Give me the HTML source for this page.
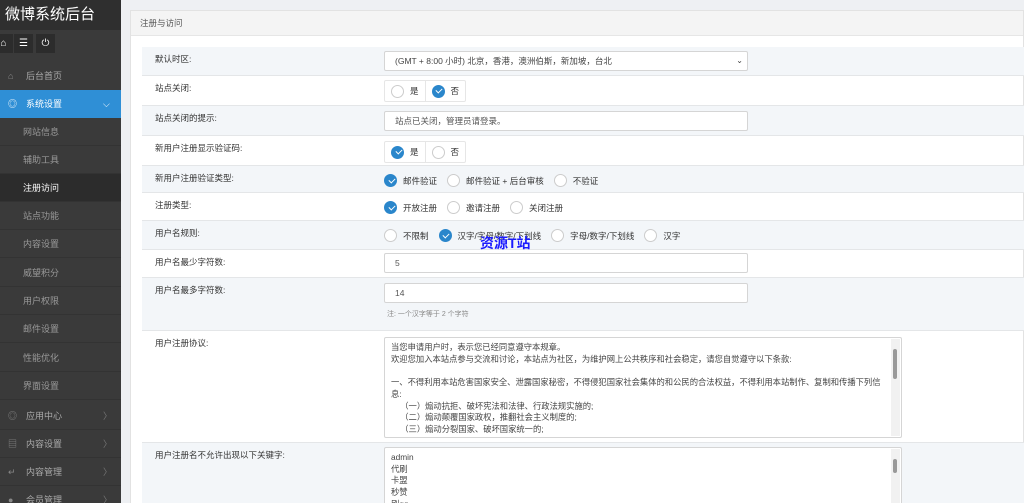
<!DOCTYPE html>
<html style="width:1024px;height:503px;overflow:hidden"><head><meta charset="utf-8"><style>
*{box-sizing:border-box;margin:0;padding:0}
body{width:1024px;height:503px;overflow:hidden;background:#eef0f3;font-family:"Liberation Sans","Noto Sans CJK SC",sans-serif;font-size:9px;color:#333;position:relative}
.sb{position:absolute;left:0;top:0;width:121px;height:503px;background:#3a3a3a}
.logo{height:30px;background:#2f2f2f;color:#fff;font-size:15px;line-height:30px;padding-left:5px}
.btns{height:30px;position:relative}
.btns div{position:absolute;top:4px;width:19px;height:19px;background:#2c2c2c;color:#fff;font-size:10px;text-align:center;line-height:19px}
.mi{position:absolute;left:0;width:121px;height:28px;line-height:28px;color:#aaa;font-size:9px}
.mi .ic{position:absolute;left:8px;color:#888}
.mi .t{position:absolute;left:26px}
.mi .ar{position:absolute;left:103px;color:#777}
.sub{position:absolute;left:0;width:121px;height:28px;line-height:28px;color:#999;padding-left:23px;border-bottom:1px solid #333}
.main{position:absolute;left:130px;top:10px;right:0;bottom:0;background:#fff;border:1px solid #e2e2e2;border-bottom:none}
.ph{height:25px;background:#f4f4f4;border-bottom:1px solid #e6e6e6;line-height:24px;padding-left:9px;font-size:8.5px;color:#555}
.row{position:absolute;left:142px;right:0;border-bottom:1px solid #e4e6e8}
.row.a{background:#f3f6f9}
.lb{position:absolute;left:13px;top:6px;font-size:8.5px;color:#333}
.inp{position:absolute;left:242px;width:364px;height:20px;border:1px solid #d5d5d5;border-radius:2px;background:#fff;padding-left:10px;line-height:18px;font-size:8.5px;color:#555}
.rg{position:absolute;left:242px;height:22px;border:1px solid #e6e6e6;border-radius:2px;background:#fff;display:flex}
.rg span{display:flex;align-items:center;padding:0 6px;border-right:1px solid #e6e6e6;font-size:8.5px}
.rg span:last-child{border:none}
.c{display:inline-block;width:13px;height:13px;border-radius:50%;border:1px solid #ccc;background:#fff;margin-right:6px;position:relative}
.c.on{background:#2a86cb;border-color:#2a86cb}
.c.on:after{content:"";position:absolute;left:3.5px;top:2.5px;width:5px;height:3px;border-left:1.5px solid #fff;border-bottom:1.5px solid #fff;transform:rotate(-45deg)}
.ro{position:absolute;left:242px;display:flex;align-items:center;font-size:8.5px}
.ro .s{margin-right:10px}
.ta{position:absolute;left:242px;width:518px;border:1px solid #d5d5d5;border-radius:2px;background:#fff;padding:4px 6px;font-size:8.3px;line-height:11.7px;color:#444;overflow:hidden}
.scr{position:absolute;right:1px;top:1px;width:9px;bottom:1px;background:#f1f1f1}
.scr i{position:absolute;left:2px;width:4px;height:30px;top:10px;background:#999;border-radius:2px}
</style></head><body>
<div class="sb">
<div class="logo">微博系统后台</div>
<div class="btns"><div style="left:-6px">⌂</div><div style="left:14px">☰</div><div style="left:36px">⏻</div></div>
<div class="mi" style="top:62px"><span class="ic">⌂</span><span class="t">后台首页</span></div>
<div class="mi" style="top:90px;background:#2f8fd6;color:#fff"><span class="ic" style="color:#fff">◎</span><span class="t">系统设置</span><span class="ar" style="color:#fff">⌵</span></div>
<div class="sub" style="top:118px">网站信息</div>
<div class="sub" style="top:146px">辅助工具</div>
<div class="sub" style="top:174px;background:#2c2c2c;color:#fff">注册访问</div>
<div class="sub" style="top:202px">站点功能</div>
<div class="sub" style="top:230px">内容设置</div>
<div class="sub" style="top:259px">威望积分</div>
<div class="sub" style="top:287px">用户权限</div>
<div class="sub" style="top:315px">邮件设置</div>
<div class="sub" style="top:344px">性能优化</div>
<div class="sub" style="top:372px">界面设置</div>
<div class="mi" style="top:402px;border-bottom:1px solid #333"><span class="ic">◎</span><span class="t">应用中心</span><span class="ar">〉</span></div>
<div class="mi" style="top:430px;border-bottom:1px solid #333"><span class="ic">▤</span><span class="t">内容设置</span><span class="ar">〉</span></div>
<div class="mi" style="top:458px;border-bottom:1px solid #333"><span class="ic">↵</span><span class="t">内容管理</span><span class="ar">〉</span></div>
<div class="mi" style="top:486px"><span class="ic">●</span><span class="t">会员管理</span><span class="ar">〉</span></div>
</div>
<div class="main"><div class="ph">注册与访问</div></div>

<div class="row a" style="top:47px;height:29px"><div class="lb">默认时区:</div><div class="inp" style="top:4px;color:#444">(GMT + 8:00 小时) 北京，香港，澳洲伯斯，新加坡，台北<span style="position:absolute;right:4px;font-size:8px">⌄</span></div></div>
<div class="row" style="top:76px;height:30px"><div class="lb">站点关闭:</div><div class="rg" style="top:4px"><span><i class="c"></i>是</span><span><i class="c on"></i>否</span></div></div>
<div class="row a" style="top:106px;height:30px"><div class="lb">站点关闭的提示:</div><div class="inp" style="top:5px">站点已关闭，管理员请登录。</div></div>
<div class="row" style="top:136px;height:30px"><div class="lb">新用户注册显示验证码:</div><div class="rg" style="top:5px"><span><i class="c on"></i>是</span><span><i class="c"></i>否</span></div></div>
<div class="row a" style="top:166px;height:27px"><div class="lb">新用户注册验证类型:</div><div class="ro" style="top:8px"><i class="c on"></i><span class="s">邮件验证</span><i class="c"></i><span class="s">邮件验证 + 后台审核</span><i class="c"></i><span>不验证</span></div></div>
<div class="row" style="top:193px;height:28px"><div class="lb">注册类型:</div><div class="ro" style="top:8px"><i class="c on"></i><span class="s">开放注册</span><i class="c"></i><span class="s">邀请注册</span><i class="c"></i><span>关闭注册</span></div></div>
<div class="row a" style="top:221px;height:29px"><div class="lb">用户名规则:</div><div class="ro" style="top:8px"><i class="c"></i><span class="s">不限制</span><i class="c on"></i><span class="s">汉字/字母/数字/下划线</span><i class="c"></i><span class="s">字母/数字/下划线</span><i class="c"></i><span>汉字</span></div>
<div style="position:absolute;left:338px;top:12px;color:#1b1bff;font-weight:bold;font-size:14px">资源T站</div></div>
<div class="row" style="top:250px;height:28px"><div class="lb">用户名最少字符数:</div><div class="inp" style="top:3px">5</div></div>
<div class="row a" style="top:278px;height:53px"><div class="lb">用户名最多字符数:</div><div class="inp" style="top:5px">14</div><div style="position:absolute;left:245px;top:31px;font-size:7px;color:#888">注: 一个汉字等于 2 个字符</div></div>
<div class="row" style="top:331px;height:112px"><div class="lb">用户注册协议:</div><div class="ta" style="top:6px;height:101px">当您申请用户时，表示您已经同意遵守本规章。<br>欢迎您加入本站点参与交流和讨论，本站点为社区，为维护网上公共秩序和社会稳定，请您自觉遵守以下条款:<br><br>一、不得利用本站危害国家安全、泄露国家秘密，不得侵犯国家社会集体的和公民的合法权益，不得利用本站制作、复制和传播下列信<br>息:<br>&nbsp;&nbsp;&nbsp;&nbsp;（一）煽动抗拒、破坏宪法和法律、行政法规实施的;<br>&nbsp;&nbsp;&nbsp;&nbsp;（二）煽动颠覆国家政权，推翻社会主义制度的;<br>&nbsp;&nbsp;&nbsp;&nbsp;（三）煽动分裂国家、破坏国家统一的;<div class="scr"><i></i></div></div></div>
<div class="row a" style="top:443px;height:60px;border:none;overflow:hidden"><div class="lb">用户注册名不允许出现以下关键字:</div><div class="ta" style="top:4px;height:70px">admin<br>代刷<br>卡盟<br>秒赞<br>刷qq<div class="scr"><i style="height:14px"></i></div></div></div>
</body></html>
